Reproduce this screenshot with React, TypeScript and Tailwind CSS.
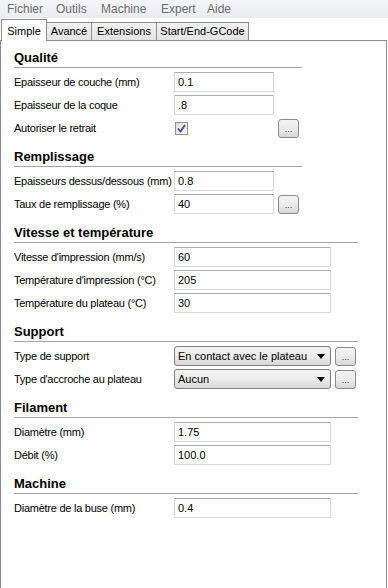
const font = { fontFamily: '"Liberation Sans", Arial, sans-serif' };

function Field({ value, wide }: { value: string; wide?: boolean }) {
  return (
    <div
      className={`h-[20px] ${wide ? "w-[157px]" : "w-[100px]"} flex items-center border border-[#d5d8de] border-t-[#abadb3] bg-white pl-[3px] text-[11px] text-black`}
    >
      {value}
    </div>
  );
}

function DotsButton() {
  return (
    <div className="h-[19px] w-[21px] flex items-center justify-center rounded-[3px] border border-[#8a8a8a] bg-gradient-to-b from-[#f4f4f4] via-[#ebebeb] to-[#d6d6d6] pt-[2px] text-[9px] leading-[12px] text-[#333]">
      ...
    </div>
  );
}

function Select({ value }: { value: string }) {
  return (
    <div className="h-[20px] w-[157px] flex items-center justify-between rounded-[3px] border border-[#7f7f7f] bg-gradient-to-b from-[#f4f4f4] via-[#ebebeb] to-[#d8d8d8] pl-[3px] pr-[5px] text-[11px] text-black">
      <span>{value}</span>
      <svg width="8" height="5" viewBox="0 0 8 5">
        <path d="M0 0h8L4 5z" fill="#000" />
      </svg>
    </div>
  );
}

function Checkbox() {
  return (
    <div className="h-[13px] w-[13px] flex items-center justify-center border border-[#8f8f8f] bg-gradient-to-br from-[#dcdcdc] to-[#f8f8f8]">
      <svg width="9" height="9" viewBox="0 0 9 9">
        <path d="M1 4.5l2.5 3L8 1" fill="none" stroke="#3d5389" strokeWidth="1.8" />
      </svg>
    </div>
  );
}

function Row({ label, children }: { label: string; children: React.ReactNode }) {
  return (
    <div className="flex h-[20px] items-center">
      <div className="w-[160px] shrink-0 whitespace-nowrap text-[11px] tracking-[-0.25px] text-black">
        {label}
      </div>
      <div className="flex items-center">{children}</div>
    </div>
  );
}

function Section({
  title,
  wide,
  first,
  children,
}: {
  title: string;
  wide?: boolean;
  first?: boolean;
  children: React.ReactNode;
}) {
  return (
    <div className={first ? "" : "mt-[11px]"}>
      <div
        className={`${wide ? "w-[344px]" : "w-[288px]"} border-b border-[#a5a5a5] pb-[1px] text-[13px] font-bold leading-[16px] text-black`}
      >
        {title}
      </div>
      <div className="mt-[4px] flex flex-col gap-[3px]">{children}</div>
    </div>
  );
}

export default function App() {
  const menus = [
    ["Fichier", "w-[49px]"],
    ["Outils", "w-[45px]"],
    ["Machine", "w-[60px]"],
    ["Expert", "w-[46px]"],
    ["Aide", "w-[40px]"],
  ];
  const tabs = [
    ["Avancé", "w-[46px]"],
    ["Extensions", "w-[66px]"],
    ["Start/End-GCode", "w-[93px]"],
  ];

  return (
    <div className="h-[588px] w-[388px] overflow-hidden bg-white" style={font}>
      {/* menu bar */}
      <div className="flex h-[18px] items-center bg-gradient-to-b from-[#f3f5f8] to-[#e8ebf0] pl-[7px] text-[12px] text-[#6d6d6d]">
        {menus.map(([m, w]) => (
          <div key={m} className={w}>
            {m}
          </div>
        ))}
      </div>

      {/* tabs */}
      <div className="flex h-[22px] items-end pl-[1px]">
        <div className="relative z-10 -mb-px flex h-[22px] w-[46px] items-start justify-center border border-b-0 border-[#898c95] bg-white pt-[3px] text-[11px] text-black">
          Simple
        </div>
        {tabs.map(([t, w]) => (
          <div
            key={t}
            className={`-ml-px flex h-[18px] ${w} items-center justify-center border border-b-0 border-[#898c95] bg-gradient-to-b from-[#f2f2f2] to-[#e3e3e3] text-[11px] text-black`}
          >
            {t}
          </div>
        ))}
      </div>

      {/* panel */}
      <div className="h-[560px] w-[387px] border border-b-0 border-[#898c95] pl-[13px] pt-[9px]">
        <Section title="Qualité" first>
          <Row label="Epaisseur de couche (mm)">
            <Field value="0.1" />
          </Row>
          <Row label="Epaisseur de la coque">
            <Field value=".8" />
          </Row>
          <Row label="Autoriser le retrait">
            <div className="flex w-[104px] items-center pl-[1px]">
              <Checkbox />
            </div>
            <DotsButton />
          </Row>
        </Section>

        <Section title="Remplissage">
          <Row label="Epaisseurs dessus/dessous (mm)">
            <Field value="0.8" />
          </Row>
          <Row label="Taux de remplissage (%)">
            <Field value="40" />
            <div className="ml-[4px]">
              <DotsButton />
            </div>
          </Row>
        </Section>

        <Section title="Vitesse et température" wide>
          <Row label="Vitesse d'impression (mm/s)">
            <Field value="60" wide />
          </Row>
          <Row label="Température d'impression (°C)">
            <Field value="205" wide />
          </Row>
          <Row label="Température du plateau (°C)">
            <Field value="30" wide />
          </Row>
        </Section>

        <Section title="Support" wide>
          <Row label="Type de support">
            <Select value="En contact avec le plateau" />
            <div className="ml-[4px]">
              <DotsButton />
            </div>
          </Row>
          <Row label="Type d'accroche au plateau">
            <Select value="Aucun" />
            <div className="ml-[4px]">
              <DotsButton />
            </div>
          </Row>
        </Section>

        <Section title="Filament" wide>
          <Row label="Diamètre (mm)">
            <Field value="1.75" wide />
          </Row>
          <Row label="Débit (%)">
            <Field value="100.0" wide />
          </Row>
        </Section>

        <Section title="Machine" wide>
          <Row label="Diamètre de la buse (mm)">
            <Field value="0.4" wide />
          </Row>
        </Section>
      </div>
    </div>
  );
}
